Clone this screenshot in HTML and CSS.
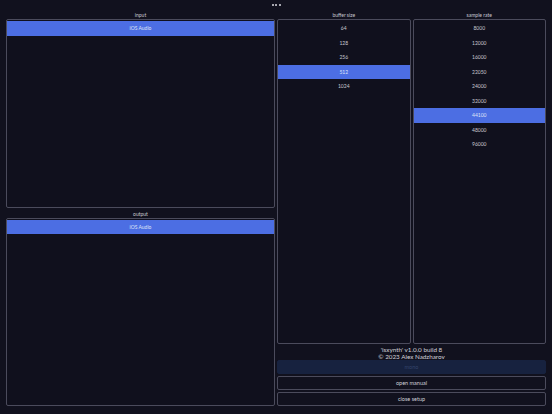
FILE: index.html
```html
<!DOCTYPE html>
<html>
<head>
<meta charset="utf-8">
<link rel="stylesheet" href="styles.css">
</head>
<body>
<div class="topbar"><span class="dot"></span><span class="dot"></span><span class="dot"></span></div>
<div class="main">
  <div class="col-left">
    <div class="label">input</div>
    <div class="box">
      <div class="row sel">iOS Audio</div>
    </div>
    <div class="label">output</div>
    <div class="box box-out">
      <div class="row sel">iOS Audio</div>
    </div>
  </div>
  <div class="col-right">
    <div class="lists">
      <div class="sub">
        <div class="label">buffer size</div>
        <div class="box">
          <div class="row">64</div>
          <div class="row">128</div>
          <div class="row">256</div>
          <div class="row sel">512</div>
          <div class="row">1024</div>
        </div>
      </div>
      <div class="sub">
        <div class="label">sample rate</div>
        <div class="box">
          <div class="row">8000</div>
          <div class="row">12000</div>
          <div class="row">16000</div>
          <div class="row">22050</div>
          <div class="row">24000</div>
          <div class="row">32000</div>
          <div class="row sel">44100</div>
          <div class="row">48000</div>
          <div class="row">96000</div>
        </div>
      </div>
    </div>
    <div class="info">
      <div>'isxynth' v1.0.0 build 8</div>
      <div>© 2023 Alex Nadzharov</div>
    </div>
    <div class="btn btn-mono">mono</div>
    <div class="btn">open manual</div>
    <div class="btn">close setup</div>
  </div>
</div>
</body>
</html>
```

FILE: styles.css
```css
html, body {
  margin: 0;
  padding: 0;
}
body {
  width: 552px;
  height: 414px;
  background: #11111e;
  color: #c9c9d2;
  font-family: Lato, "Open Sans", sans-serif;
  overflow: hidden;
}
.topbar {
  height: 9px;
  display: flex;
  justify-content: center;
  align-items: center;
  gap: 1.5px;
}
.dot {
  width: 2px;
  height: 2px;
  background: #d8d8e0;
  border-radius: 1px;
}
.main {
  display: flex;
  gap: 2px;
  padding: 0 6px 8px 6px;
  height: 397px;
}
.col-left {
  width: 269px;
  display: flex;
  flex-direction: column;
}
.label {
  height: 10px;
  line-height: 12px;
  font-size: 5px;
  text-align: center;
}
.box {
  border: 1px solid #4b4b5c;
  border-radius: 2px;
  padding: 1px 0 0 0;
  background: #10101d;
  flex: 1;
  box-sizing: border-box;
}
.row {
  height: 14.5px;
  line-height: 14.5px;
  font-size: 5px;
  text-align: center;
}
.row.sel {
  background: #4c6ee3;
  color: #dfe4f7;
}
.col-right {
  flex: 1;
  display: flex;
  flex-direction: column;
}
.lists {
  flex: 1;
  display: flex;
  gap: 2px;
}
.sub {
  flex: 1;
  display: flex;
  flex-direction: column;
}
.info {
  height: 16px;
  padding-top: 2.5px;
  box-sizing: border-box;
  font-size: 6.3px;
  line-height: 7px;
  text-align: center;
  color: #d2d2da;
}
.btn {
  height: 14px;
  margin-top: 2px;
  box-sizing: border-box;
  border: 1px solid #4b4b5c;
  border-radius: 2px;
  font-size: 5.5px;
  line-height: 12px;
  text-align: center;
  color: #d0d0d8;
}
.btn-mono {
  margin-top: 0.5px;
  border-color: #17223f;
  background: #17223f;
  color: #34446b;
}
```
